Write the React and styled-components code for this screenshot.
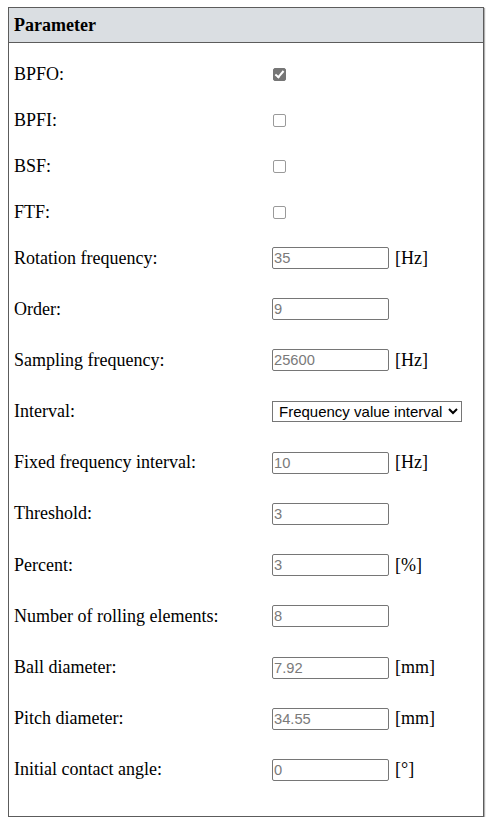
import styled, { createGlobalStyle } from "styled-components";

const GlobalStyle = createGlobalStyle`
    body {
        margin: 7px 8px;
        font-family: "Liberation Serif", "Times New Roman", serif;
        font-size: 18px;
        color: #000;
        background: #fff;
    }
`;

const Panel = styled.div`
    width: 476px;
    box-sizing: border-box;
    border: 1px solid #5c5c5c;
    box-shadow: 1px 1px 1px #b0b0b0;
    padding-bottom: 21px;
`;

const Header = styled.div`
    background-color: #dadee2;
    border-bottom: 1px solid #5c5c5c;
    height: 34px;
    padding: 0 5px;
    display: flex;
    align-items: center;
    font-weight: bold;
`;

const Body = styled.div`
    padding: 8px 5px 0;
    display: flex;
    flex-direction: column;
`;

const Group = styled.div`
    display: flex;
    flex-direction: column;
    margin-top: ${(p) => p.$offset || 0}px;
`;

const Row = styled.div`
    display: grid;
    grid-template-columns: 258px 1fr;
    align-items: center;
    height: ${(p) => p.$h}px;
`;

const Label = styled.span``;

const Field = styled.div`
    display: flex;
    align-items: center;
    gap: 6px;
`;

const Check = styled.input.attrs({ type: "checkbox" })`
    appearance: none;
    -webkit-appearance: none;
    position: relative;
    margin: 0 0 0 1px;
    width: 13px;
    height: 13px;
    box-sizing: border-box;
    border: 1px solid #9a9a9a;
    border-radius: 2px;
    background: #fff;

    &:checked {
        background: #767676;
        border-color: #767676;
    }

    &:checked::after {
        content: "";
        position: absolute;
        left: 3px;
        top: 0px;
        width: 3px;
        height: 7px;
        border: solid #fff;
        border-width: 0 2px 2px 0;
        transform: rotate(40deg);
    }
`;

const TextBox = styled.input.attrs({ type: "text" })`
    width: 117px;
    height: 22px;
    box-sizing: border-box;
    border: 1px solid #767676;
    border-radius: 2px;
    padding: 1px 1px;
    font-family: Arial, "Liberation Sans", sans-serif;
    font-size: 14.7px;
    &::placeholder {
        color: #7a7a7a;
    }
`;

const Select = styled.select`
    width: 190px;
    height: 21px;
    border: 1px solid #767676;
    border-radius: 0;
    padding: 0 2px;
    font-family: Arial, "Liberation Sans", sans-serif;
    font-size: 15px;
    color: #000;
    background: #fff;
`;

const Unit = styled.span``;

const checks = [
    { label: "BPFO:", checked: true },
    { label: "BPFI:" },
    { label: "BSF:" },
    { label: "FTF:" },
];

const fields = [
    { label: "Rotation frequency:", value: "35", unit: "[Hz]" },
    { label: "Order:", value: "9" },
    { label: "Sampling frequency:", value: "25600", unit: "[Hz]" },
    { label: "Interval:", select: true },
    { label: "Fixed frequency interval:", value: "10", unit: "[Hz]" },
    { label: "Threshold:", value: "3" },
    { label: "Percent:", value: "3", unit: "[%]" },
    { label: "Number of rolling elements:", value: "8" },
    { label: "Ball diameter:", value: "7.92", unit: "[mm]" },
    { label: "Pitch diameter:", value: "34.55", unit: "[mm]" },
    { label: "Initial contact angle:", value: "0", unit: "[°]" },
];

export default function App() {
    return (
        <>
            <GlobalStyle />
            <Panel>
                <Header>Parameter</Header>
                <Body>
                    <Group>
                        {checks.map((c) => (
                            <Row key={c.label} $h={46}>
                                <Label>{c.label}</Label>
                                <Field>
                                    <Check defaultChecked={!!c.checked} />
                                </Field>
                            </Row>
                        ))}
                    </Group>
                    <Group $offset={-2.6}>
                        {fields.map((f) => (
                            <Row key={f.label} $h={51.2}>
                                <Label>{f.label}</Label>
                                <Field>
                                    {f.select ? (
                                        <Select defaultValue="freq">
                                            <option value="freq">Frequency value interval</option>
                                            <option value="pct">Percent interval</option>
                                        </Select>
                                    ) : (
                                        <TextBox placeholder={f.value} />
                                    )}
                                    {f.unit && <Unit>{f.unit}</Unit>}
                                </Field>
                            </Row>
                        ))}
                    </Group>
                </Body>
            </Panel>
        </>
    );
}
